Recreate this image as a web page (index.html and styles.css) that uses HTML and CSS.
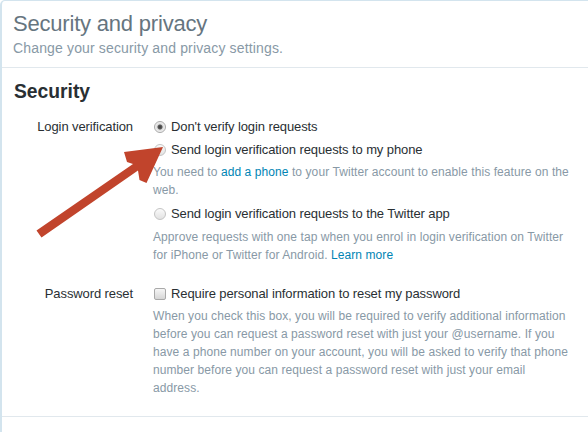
FILE: index.html
```html
<!DOCTYPE html>
<html>
<head>
    <title>Security and privacy</title>
    <link rel="stylesheet" href="styles.css">
</head>
<body>
    <div class="panel">
        <div class="header">
            <h1 class="title">Security and privacy</h1>
            <p class="subtitle">Change your security and privacy settings.</p>
        </div>

        <div class="section">
            <h2 class="section-title">Security</h2>

            <!-- login verification -->
            <div class="row">
                <div class="row-label">Login verification</div>
                <div class="row-controls">
                    <label class="option"><input type="radio" name="login" class="radio" checked>Don't verify login requests</label>
                    <label class="option option-next"><input type="radio" name="login" class="radio">Send login verification requests to my phone</label>
                    <p class="help">You need to <a href="#" class="link">add a phone</a> to your Twitter account to enable this feature on the web.</p>
                    <label class="option option-after-help"><input type="radio" name="login" class="radio">Send login verification requests to the Twitter app</label>
                    <p class="help help-second">Approve requests with one tap when you enrol in login verification on Twitter for iPhone or Twitter for Android. <a href="#" class="link">Learn more</a></p>
                </div>
            </div>

            <!-- password reset -->
            <div class="row row-password">
                <div class="row-label">Password reset</div>
                <div class="row-controls">
                    <label class="option"><input type="checkbox" class="check">Require personal information to reset my password</label>
                    <p class="help">When you check this box, you will be required to verify additional information before you can request a password reset with just your @username. If you have a phone number on your account, you will be asked to verify that phone number before you can request a password reset with just your email address.</p>
                </div>
            </div>
        </div>
    </div>

    <svg class="arrow" width="588" height="432" viewBox="0 0 588 432">
        <polygon points="163,147 124,152 127,162 133,164 36.5,230.5 41.5,237.5 138,170.5 139.5,180 146.5,183" fill="#c1442c"/>
    </svg>
</body>
</html>
```

FILE: styles.css
```css
body{
    margin:0;
    background-color:#ffffff;
    font-family:"Liberation Sans", Arial, sans-serif;
    color:#292f33;
}

.panel{
    border-left:2px solid #d3e4ee;
    border-top:1px solid #d3e4ee;
    border-top-left-radius:5px;
    height:431px;
    overflow:hidden;
}

.header{
    padding:9px 12px 10px 11px;
    border-bottom:1px solid #e1e8ed;
}
.title{
    margin:0 0 1px 0;
    font-size:22px;
    letter-spacing:-0.2px;
    line-height:28px;
    font-weight:normal;
    color:#66757f;
}
.subtitle{
    margin:0;
    font-size:14px;
    letter-spacing:0.15px;
    line-height:18px;
    color:#8899a6;
}

.section{
    padding:12px 12px 19px 11px;
    border-bottom:1px solid #e1e8ed;
}
.section-title{
    margin:0 0 14px 1px;
    font-size:19.3px;
    line-height:24px;
    font-weight:bold;
    color:#292f33;
}

.row{
    display:grid;
    grid-template-columns:120px 1fr;
    column-gap:20px;
    font-size:13px;
    letter-spacing:-0.1px;
    line-height:18px;
}
.row-password{
    margin-top:21px;
}
.row-label{
    text-align:right;
    color:#292f33;
}
.row-controls{
    display:flex;
    flex-direction:column;
    padding-right:4px;
}

.option{
    display:flex;
    align-items:center;
    color:#292f33;
}
.option-next{
    margin-top:5px;
}
.option-after-help{
    margin-top:6px;
}

.help{
    margin:4px 0 0 0;
    font-size:12px;
    letter-spacing:0.08px;
    color:#8899a6;
}
.help-second{
    margin-top:5px;
}
.link{
    color:#0084b4;
    text-decoration:none;
}

.radio{
    appearance:none;
    -webkit-appearance:none;
    width:12px;
    height:12px;
    margin:0 5px 0 1px;
    border:1px solid #c4c4c4;
    border-radius:50%;
    background:linear-gradient(#fafafa, #e2e2e2);
}
.radio:checked{
    border-color:#a9a9a9;
    background:radial-gradient(circle, #3c3c3c 0, #5a5a5a 2px, #dcdcdc 3px, #f2f2f2 5px);
}
.check{
    appearance:none;
    -webkit-appearance:none;
    width:12px;
    height:12px;
    margin:0 5px 0 1px;
    border:1px solid #a9a9a9;
    border-radius:2px;
    background:linear-gradient(#f6f6f6, #d6d6d6);
}

.arrow{
    position:absolute;
    left:0;
    top:0;
    pointer-events:none;
}
```
